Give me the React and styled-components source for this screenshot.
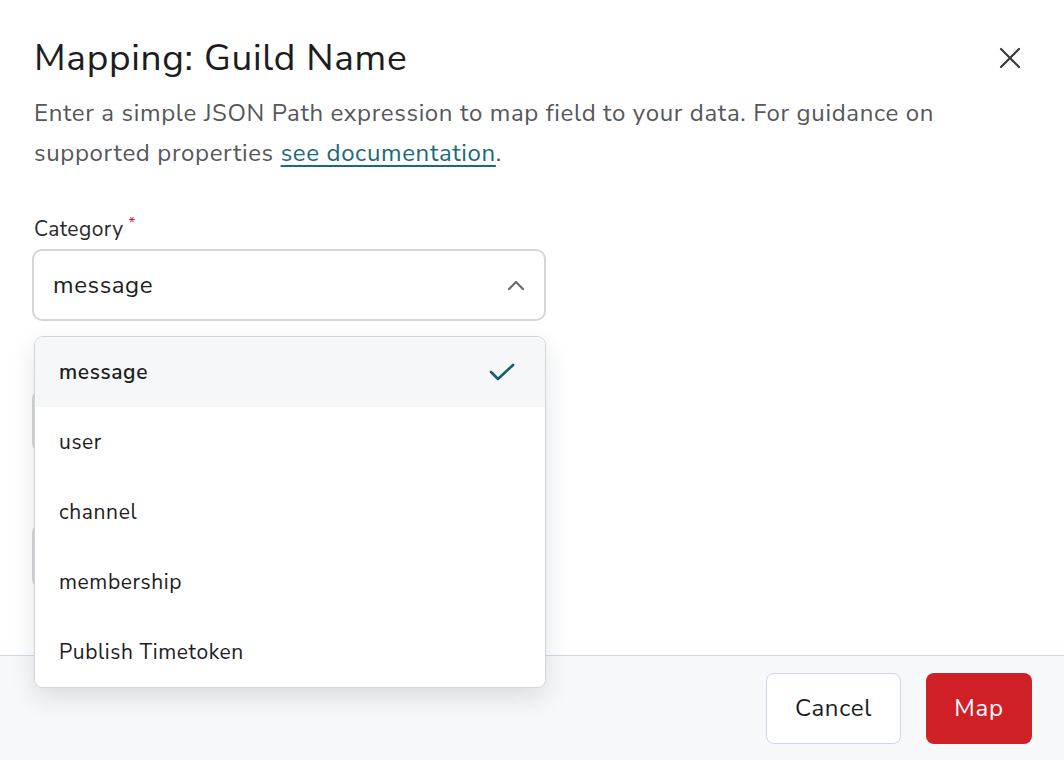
import React from 'react';
import styled, { createGlobalStyle } from 'styled-components';

const GlobalStyle = createGlobalStyle`
  html, body {
    margin: 0;
    padding: 0;
    background: #fff;
  }
  body {
    font-family: "Nunito Sans", "Open Sans", "Liberation Sans", sans-serif;
    color: #1d1d1f;
  }
`;

const Dialog = styled.div`
  width: 1064px;
  height: 760px;
  display: flex;
  flex-direction: column;
  background: #fff;
  overflow: hidden;
`;

const Body = styled.div`
  flex: 1;
  padding: 30px 34px 0 34px;
`;

const Header = styled.div`
  display: flex;
  align-items: center;
  justify-content: space-between;
`;

const Title = styled.h1`
  margin: 0;
  font-size: 37px;
  font-weight: 400;
  letter-spacing: 0.7px;
  line-height: 56px;
  color: #1d1d1f;
`;

const CloseButton = styled.button`
  border: 0;
  background: none;
  padding: 0;
  width: 40px;
  height: 40px;
  display: flex;
  align-items: center;
  justify-content: center;
  color: #3a3a3c;
  cursor: pointer;
`;

const Description = styled.p`
  margin: 7px 0 0 0;
  font-size: 24px;
  letter-spacing: 0.65px;
  line-height: 40px;
  color: #55575b;
  max-width: 930px;
`;

const DocLink = styled.a`
  color: #1a6a78;
  text-decoration: underline;
  text-underline-offset: 4px;
`;

const Field = styled.div`
  position: relative;
  width: 514px;
  margin-left: -2px;
  margin-top: ${p => p.$top || 0}px;
`;

const Label = styled.label`
  display: block;
  padding-left: 2px;
  font-size: 21px;
  letter-spacing: 0.4px;
  line-height: 28px;
  color: #2a2a2c;
  margin-bottom: 6px;
`;

const Required = styled.sup`
  color: #d0242b;
  font-size: 15px;
  margin-left: 5px;
  vertical-align: 8px;
  line-height: 0;
`;

const SelectBox = styled.div`
  box-sizing: border-box;
  height: 72px;
  border: 2px solid #d6d6d8;
  border-radius: 10px;
  display: flex;
  align-items: center;
  justify-content: space-between;
  padding: 0 18px 0 19px;
  font-size: 24px;
  letter-spacing: 0.6px;
  color: #1d1d1f;
  background: #fff;
`;

const Input = styled.div`
  box-sizing: border-box;
  height: ${p => p.$h || 64}px;
  border: 2px solid #d6d6d8;
  border-radius: 10px;
  background: #fff;
`;

const Menu = styled.ul`
  position: absolute;
  top: 121px;
  left: 2px;
  right: 0;
  margin: 0;
  padding: 0;
  list-style: none;
  background: #fff;
  border: 1.5px solid #d3d4d7;
  border-radius: 9px;
  box-shadow: 0 10px 24px rgba(20, 30, 50, 0.12);
  overflow: hidden;
  z-index: 5;
`;

const Option = styled.li`
  height: 70px;
  display: flex;
  align-items: center;
  justify-content: space-between;
  padding: 0 30px 0 24px;
  font-size: 21px;
  letter-spacing: 0.6px;
  font-weight: ${p => (p.$selected ? 600 : 400)};
  color: #1d1d1f;
  background: ${p => (p.$selected ? '#f6f7f9' : '#fff')};
`;

const Footer = styled.div`
  height: 105px;
  border-top: 1.5px solid #cfd9e6;
  background: #f7f8fa;
  display: flex;
  align-items: center;
  justify-content: flex-end;
  gap: 25px;
  padding: 0 32px 0 0;
  box-sizing: border-box;
`;

const Button = styled.button`
  height: 71px;
  padding: 0 26px;
  min-width: ${p => (p.$primary ? 106 : 135)}px;
  border-radius: 8px;
  font-family: inherit;
  font-size: 24px;
  letter-spacing: 0.7px;
  border: ${p => (p.$primary ? '0' : '1.5px solid #cdd7e5')};
  background: ${p => (p.$primary ? '#cf2027' : '#fff')};
  color: ${p => (p.$primary ? '#fff' : '#1d1d1f')};
  cursor: pointer;
`;

const options = ['message', 'user', 'channel', 'membership', 'Publish Timetoken'];

export default function App() {
  return (
    <Dialog>
      <GlobalStyle />
      <Body>
        <Header>
          <Title>Mapping: Guild Name</Title>
          <CloseButton aria-label="Close">
            <svg width="24" height="24" viewBox="0 0 24 24" fill="none" stroke="currentColor" strokeWidth="2.2" strokeLinecap="round">
              <path d="M3 3 L21 21 M21 3 L3 21" />
            </svg>
          </CloseButton>
        </Header>
        <Description>
          Enter a simple JSON Path expression to map field to your data. For guidance on supported properties{' '}
          <DocLink href="#">see documentation</DocLink>.
        </Description>

        <Field $top={42}>
          <Label>
            Category<Required>*</Required>
          </Label>
          <SelectBox>
            <span>message</span>
            <svg width="20" height="12" viewBox="0 0 20 12" fill="none" stroke="#6b6c70" strokeWidth="2.2" strokeLinecap="round" strokeLinejoin="round">
              <path d="M3 10 L10 3 L17 10" />
            </svg>
          </SelectBox>
          <Menu>
            {options.map((o, i) => (
              <Option key={o} $selected={i === 0}>
                <span>{o}</span>
                {i === 0 && (
                  <svg width="26" height="20" viewBox="0 0 26 20" fill="none" stroke="#145f6b" strokeWidth="2.6" strokeLinecap="round" strokeLinejoin="round">
                    <path d="M2 10 L9 17 L24 3" />
                  </svg>
                )}
              </Option>
            ))}
          </Menu>
        </Field>

        <Field $top={68}>
          <Input $h={64} />
        </Field>

        <Field $top={70}>
          <Input $h={66} />
        </Field>
      </Body>
      <Footer>
        <Button>Cancel</Button>
        <Button $primary>Map</Button>
      </Footer>
    </Dialog>
  );
}
